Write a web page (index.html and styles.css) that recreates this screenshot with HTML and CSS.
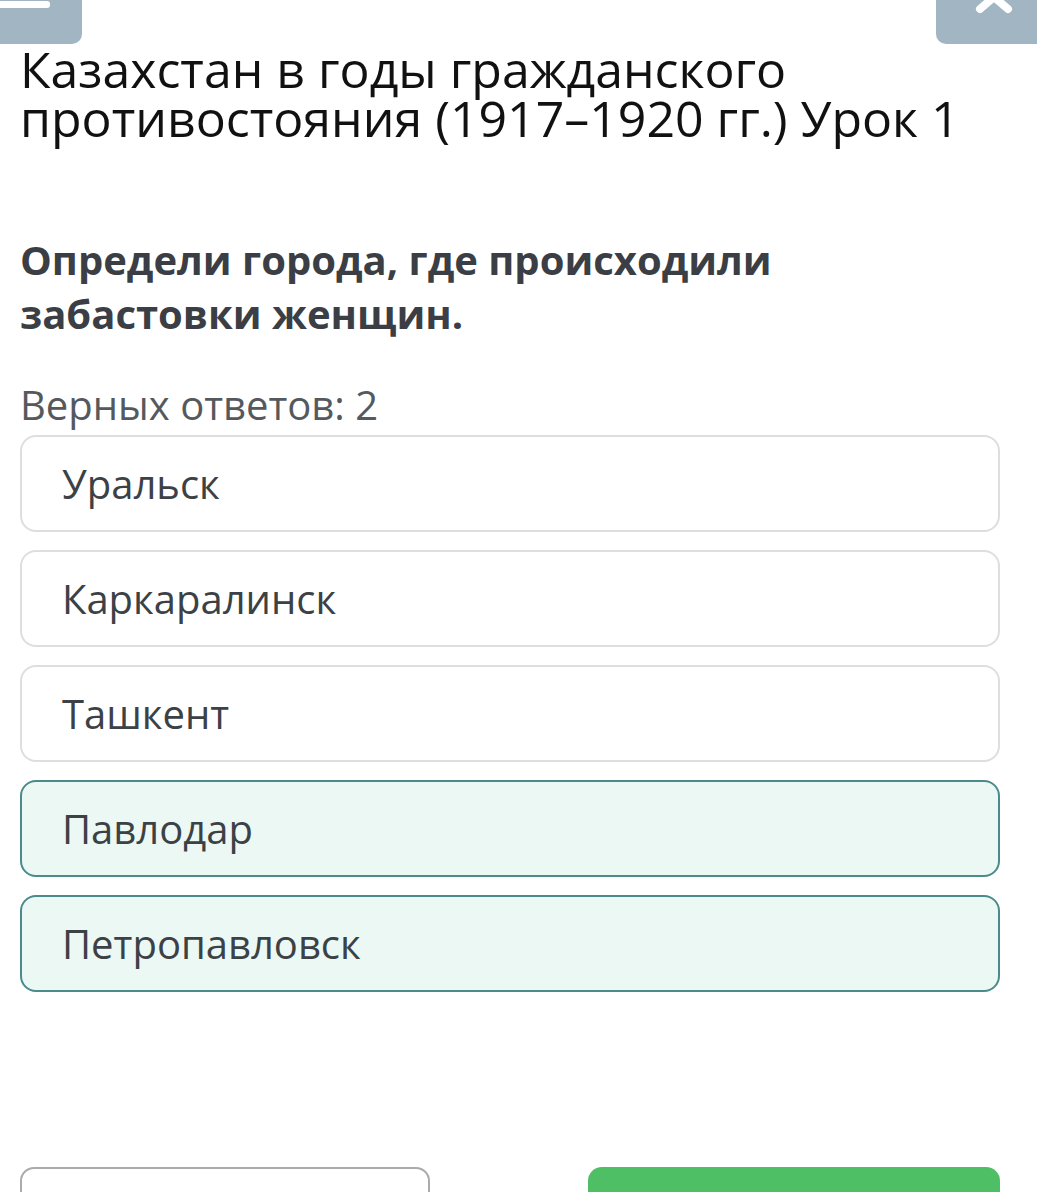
FILE: index.html
```html
<!DOCTYPE html>
<html lang="ru">
<head>
<meta charset="utf-8">
<link rel="stylesheet" href="styles.css">
</head>
<body>
<div class="topbar">
  <div class="tb-btn tb-left"><span class="tb-line"></span></div>
  <div class="tb-btn tb-right">
    <svg class="tb-x" width="46" height="20" viewBox="0 0 46 20"><path d="M9 -15 L37 9 M37 -15 L9 9" stroke="#fff" stroke-width="8" stroke-linecap="round" fill="none"/></svg>
  </div>
</div>
<main class="content">
  <h1 class="title">Казахстан в годы гражданского противостояния (1917–1920 гг.) Урок 1</h1>
  <p class="question">Определи города, где происходили забастовки женщин.</p>
  <p class="count">Верных ответов: 2</p>
  <div class="options">
    <div class="option">Уральск</div>
    <div class="option">Каркаралинск</div>
    <div class="option">Ташкент</div>
    <div class="option selected">Павлодар</div>
    <div class="option selected">Петропавловск</div>
  </div>
  <div class="actions">
    <div class="btn btn-outline"></div>
    <div class="btn btn-green"></div>
  </div>
</main>
</body>
</html>
```
FILE: styles.css
```css
* { box-sizing: border-box; }
html, body { margin: 0; padding: 0; background: #fff; }
body { font-family: "Open Sans", "Noto Sans", sans-serif; width: 1037px; height: 1192px; overflow: hidden; }
.topbar { height: 44px; display: flex; justify-content: space-between; }
.tb-btn { background: #a2b5c2; height: 44px; position: relative; }
.tb-left { width: 82px; border-radius: 0 0 10px 0; }
.tb-right { width: 101px; border-radius: 0 0 0 10px; }
.tb-line { position: absolute; left: 0; top: 1px; width: 50px; height: 7px; background: #fff; border-radius: 0 3px 3px 0; }
.tb-x { position: absolute; left: 35px; top: 0; }
.content { padding: 0 37px 0 20px; }
.title { margin: 1px 0 0; font-weight: 400; font-size: 50px; line-height: 49px; color: #111; }
.question { margin: 90px 0 0; font-weight: 700; font-size: 40px; line-height: 54px; color: #3b3f45; }
.count { margin: 42px 0 0; font-size: 40px; line-height: 44px; color: #55595e; }
.options { display: flex; flex-direction: column; gap: 18px; margin-top: 8px; }
.option { height: 97px; border: 2px solid #dedede; border-radius: 16px; padding: 0 0 0 40px; display: flex; align-items: center; font-size: 40px; color: #3c4146; }
.option.selected { background: #ecf8f3; border-color: #4b8b8b; }
.actions { display: flex; justify-content: space-between; margin-top: 175px; }
.btn { height: 60px; border-radius: 14px; }
.btn-outline { width: 410px; border: 2px solid #a9abad; }
.btn-green { width: 412px; background: #4fbf66; }
```
